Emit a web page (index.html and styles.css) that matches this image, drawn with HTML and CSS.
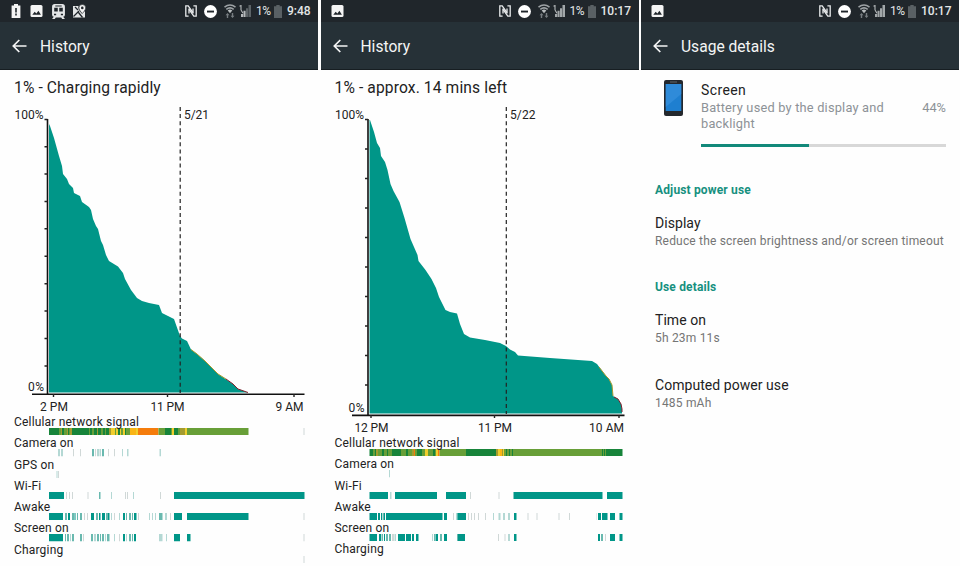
FILE: index.html
```html
<!DOCTYPE html>
<html lang="en">

<head>
    <meta charset="UTF-8" />
    <meta name="viewport" content="width=device-width, initial-scale=1.0" />
    <title>Battery History</title>
    <link rel="stylesheet" href="styles.css">
</head>

<body>
    <!-- shared icons -->
    <svg class="sprite">
        <symbol id="alert" viewBox="0 0 10 14">
            <path fill="#f4f4f4" fill-rule="evenodd" d="M3 0h4v1.6h2.4V14H.6V1.6H3zM4.2 4v4.4h1.6V4zM4.2 9.6v1.8h1.6V9.6z" />
        </symbol>
        <symbol id="image" viewBox="0 0 12 12">
            <rect width="12" height="12" rx="1.5" fill="#f4f4f4" />
            <path fill="#20262b" d="M1.8 9.7l2.4-3 1.7 1.8 2-2.7 2.5 3.9z" />
        </symbol>
        <symbol id="train" viewBox="0 0 12 14">
            <path fill="#e4e6e7" fill-rule="evenodd" d="M2.5 0h7A2.5 2.5 0 0 1 12 2.500V10a2 2 0 0 1-1.600 2L12 14H9.500l-1-1.500h-5L2.500 14H0l1.600-2A2 2 0 0 1 0 10V2.500A2.500 2.500 0 0 1 2.500 0zM2 3.500V7h3.300V3.500zM6.700 3.500V7H10V3.500zM3 1.300v1h6v-1zM1.800 9v1.600h2V9zM8.200 9v1.600h2V9z" />
        </symbol>
        <symbol id="map" viewBox="0 0 13 13">
            <path fill="#e4e6e7" d="M0 1.500h5.500C5 4 6 6 8.800 9L12 6.500V13H0z" />
            <path stroke="#20262b" stroke-width="1.300" fill="none" d="M.5 12L6 6.500M2 2.500l3 3M5.500 8l4 5" />
            <path fill="#f4f4f4" stroke="#20262b" stroke-width=".6" d="M9.300 0A3.400 3.400 0 0 1 12.700 3.400C12.700 5.500 9.300 9 9.300 9S5.900 5.500 5.900 3.400A3.400 3.400 0 0 1 9.300 0z" />
            <circle cx="9.300" cy="3.400" r="1.300" fill="#20262b" />
        </symbol>
        <symbol id="nfc" viewBox="0 0 12 12">
            <path fill="none" stroke="#e8eaeb" stroke-width="1.300" d="M3.600 11.200H.8V.8h2.400L8 7.600M8.400 .8h2.800v10.400H8.800L4 4.400" />
            <path fill="none" stroke="#e8eaeb" stroke-width="1.300" d="M4 3.400v5.200M8 3.400v5.200" />
        </symbol>
        <symbol id="dnd" viewBox="0 0 13 13">
            <circle cx="6.500" cy="6.500" r="6.400" fill="#fff" />
            <rect x="3" y="5.600" width="7" height="1.900" fill="#20262b" />
        </symbol>
        <symbol id="wifi" viewBox="0 0 12 14">
            <path fill="none" stroke="#9ea3a6" stroke-width="1.500" d="M.5 3.200Q6-1.300 11.500 3.200M2.300 5.400Q6 2.300 9.700 5.400" />
            <path fill="#b9bdbf" d="M3.700 6.500Q6 4.700 8.300 6.500L6 9.200z" />
            <path fill="#777d81" d="M3.500 9L5.500 11.200H4.200V14H2.800V11.200H1.500zM8.500 14l-2-2.200h1.300V9h1.400v2.800h1.300z" />
        </symbol>
        <symbol id="signal" viewBox="0 0 12 12">
            <path fill="#5c6367" d="M9.500 0H12v12H9.500zM7 3.200h2.100V12H7z" />
            <path fill="#b5b9bb" d="M4.500 5.800h2.100V12H4.500zM2 9h2.100v3H2z" />
            <path fill="none" stroke="#b5b9bb" stroke-width="1.100" d="M.5 1.300L2 .6V5M2 5l2 3.200" />
        </symbol>
        <symbol id="signal-full" viewBox="0 0 12 12">
            <path fill="#a2a7a9" d="M9.500 0H12v12H9.500zM7 3.200h2.100V12H7zM4.500 5.800h2.100V12H4.500zM2 9h2.100v3H2z" />
            <path fill="none" stroke="#b5b9bb" stroke-width="1.100" d="M.5 1.300L2 .6V5M2 5l2 3.200" />
        </symbol>
        <symbol id="battery" viewBox="0 0 8 13">
            <path fill="#596064" d="M2.300 0h3.400v1.300H8V13H0V1.300h2.300z" />
        </symbol>
        <symbol id="back" viewBox="0 0 15 14">
            <path fill="none" stroke="#f4f5f5" stroke-width="1.700" d="M14.500 7H1.500M7.300 1L1.300 7l6 6" />
        </symbol>
    </svg>

    <div class="screens">
        <!-- charging history -->
        <div class="phone">
            <div class="statusbar">
                <svg class="alert"><use href="#alert" /></svg>
                <svg class="image"><use href="#image" /></svg>
                <svg class="train"><use href="#train" /></svg>
                <svg class="map"><use href="#map" /></svg>
                <div class="status-right">
                    <svg class="nfc"><use href="#nfc" /></svg>
                    <svg class="dnd"><use href="#dnd" /></svg>
                    <svg class="wifi"><use href="#wifi" /></svg>
                    <svg class="signal"><use href="#signal" /></svg>
                    <span class="percent">1%</span>
                    <svg class="battery"><use href="#battery" /></svg>
                    <span class="time short">9:48</span>
                </div>
            </div>
            <div class="toolbar">
                <svg class="back"><use href="#back" /></svg>
                <h1>History</h1>
            </div>
            <h2>1% - Charging rapidly</h2>
            <svg class="chart chart-one" viewBox="0 101 318 313">
                <path class="area" d="M49 392.500V124L50 126L54 138L59 156L62 166L63 174L67 179L69 184L73 188L74 193L80 196L82 202L89 207L91 210L93 219L96 226L98 229L101 241L103 245L106 255L109 261L118 266.500L123 273L125 279L131 290L137 298L142 301L149 303L159 305L162 313L168 316L174 319L180 336L182 338.500L187 341L191 349.500L197 354L205 361L212 368L218 374L227 380L233 384L238 389L248 392.500z" />
                <path class="warn" d="M191 349.500L197 354L205 361L212 368L218 374L226 379" />
                <path class="critical" d="M226 379L233 384L238 389L248 392.500" />
                <path class="axis" d="M47.500 119V394M32 394.200H304.500" />
                <path class="tick" d="M44.500 119.500h3M44.500 146.700h3M44.500 174h3M44.500 201.500h3M44.500 228.800h3M44.500 256.300h3M44.500 283.700h3M44.500 311h3M44.500 338.500h3M44.500 366h3M53.500 394v3M167.500 394v3M294 394v3" />
                <path class="midnight" d="M180.200 107V393" />
                <text x="14.500" y="118.500" textLength="29">100%</text>
                <text x="28" y="391" textLength="16">0%</text>
                <text x="184" y="118.500" textLength="25">5/21</text>
                <text x="40" y="411" textLength="28">2 PM</text>
                <text x="150.500" y="411" textLength="34">11 PM</text>
                <text x="275.500" y="411" textLength="28">9 AM</text>
            </svg>
            <div class="usage" id="usage1"></div>
        </div>

        <!-- discharging history -->
        <div class="phone">
            <div class="statusbar">
                <svg class="image first"><use href="#image" /></svg>
                <div class="status-right">
                    <svg class="nfc"><use href="#nfc" /></svg>
                    <svg class="dnd"><use href="#dnd" /></svg>
                    <svg class="wifi"><use href="#wifi" /></svg>
                    <svg class="signal"><use href="#signal-full" /></svg>
                    <span class="percent">1%</span>
                    <svg class="battery"><use href="#battery" /></svg>
                    <span class="time">10:17</span>
                </div>
            </div>
            <div class="toolbar">
                <svg class="back"><use href="#back" /></svg>
                <h1>History</h1>
            </div>
            <h2>1% - approx. 14 mins left</h2>
            <svg class="chart chart-two" viewBox="1 101 318 334">
                <path class="area" d="M49.500 413.500V120H50L54 132L57 143L60 148L61 156L65 162L67.500 170L70.500 184L73.500 191L79.500 202L84.500 218L90.500 239L97.500 255L98.500 261L105.500 270L111.500 279L116 288L119 297L125.500 310L130 312L137 313.500L140 324L144 334L150 337.500L165 340L180 343L186 346L190 349.500L195 352L198 355.500L230 358L272 361L277 364L286 376L289 379L292 385L293 396L298 399L301 404L302 409V413.500z" />
                <path class="warn" d="M279 367L286 376L289 379L292 385L293 396" />
                <path class="critical" d="M294 397L298 399L301 404L302 409V412" />
                <path class="axis" d="M48 119V415M32 415.400H304.500" />
                <path class="tick" d="M45 119.500h3M45 149h3M45 178.500h3M45 208h3M45 237.500h3M45 267h3M45 296.500h3M45 326h3M45 355.500h3M45 385h3M51 415v3M174.500 415v3M299 415v3" />
                <path class="midnight" d="M186.300 107V414" />
                <text x="15" y="118.500" textLength="29">100%</text>
                <text x="28.500" y="412" textLength="16">0%</text>
                <text x="190" y="118.500" textLength="25.500">5/22</text>
                <text x="34.500" y="432" textLength="34">12 PM</text>
                <text x="158" y="432" textLength="34">11 PM</text>
                <text x="269" y="432" textLength="35">10 AM</text>
            </svg>
            <div class="usage" id="usage2"></div>
        </div>

        <!-- usage details -->
        <div class="phone">
            <div class="statusbar">
                <svg class="image first"><use href="#image" /></svg>
                <div class="status-right">
                    <svg class="nfc"><use href="#nfc" /></svg>
                    <svg class="dnd"><use href="#dnd" /></svg>
                    <svg class="wifi"><use href="#wifi" /></svg>
                    <svg class="signal"><use href="#signal-full" /></svg>
                    <span class="percent">1%</span>
                    <svg class="battery"><use href="#battery" /></svg>
                    <span class="time">10:17</span>
                </div>
            </div>
            <div class="toolbar">
                <svg class="back"><use href="#back" /></svg>
                <h1>Usage details</h1>
            </div>
            <div class="summary">
                <svg class="device" viewBox="0 0 19 36">
                    <rect width="19" height="36" rx="2" fill="#24282d" />
                    <rect x="1.700" y="4" width="15.600" height="27" fill="#1e7fd0" />
                    <path d="M17.300 4v10L1.700 27V4z" fill="#3b93e0" opacity=".6" />
                    <path d="M6 2h7" stroke="#62686d" />
                </svg>
                <div class="summary-text">
                    <h3>Screen</h3>
                    <div class="summary-row">
                        <p>Battery used by the display and backlight</p>
                        <span>44%</span>
                    </div>
                    <div class="progress">
                        <div class="progress-fill"></div>
                    </div>
                </div>
            </div>
            <div class="details">
                <h4>Adjust power use</h4>
                <div class="item">
                    <h3>Display</h3>
                    <p>Reduce the screen brightness and/or screen timeout</p>
                </div>
                <h4>Use details</h4>
                <div class="item">
                    <h3>Time on</h3>
                    <p>5h 23m 11s</p>
                </div>
                <div class="item">
                    <h3>Computed power use</h3>
                    <p>1485 mAh</p>
                </div>
            </div>
        </div>
    </div>

    <script src="script.js"></script>
</body>

</html>
```
FILE: styles.css
```css
* {
    box-sizing: border-box;
}

body {
    margin: 0;
    background: #fefefe;
    font-family: Roboto, "Liberation Sans", sans-serif;
    color: #222;
    overflow: hidden;
}

h1,
h2,
h3,
h4,
p {
    margin: 0;
    font-weight: 400;
}

svg {
    display: block;
    flex: none;
}

.sprite {
    display: none;
}

.screens {
    display: grid;
    grid-template-columns: 318px 318px 318px;
    column-gap: 2.5px;
    height: 566px;
}

.phone {
    overflow: hidden;
}

/* top bars */
.statusbar {
    display: flex;
    align-items: center;
    height: 22px;
    padding: 0 7px 0 11px;
    background: #20262b;
    color: #e4e6e7;
}

.alert {
    width: 10px;
    height: 14px;
}

.image {
    width: 13px;
    height: 12px;
    margin-left: 9px;
}

.image.first {
    margin-left: -1px;
}

.train {
    width: 13px;
    height: 15px;
    margin-left: 9px;
}

.map {
    width: 13px;
    height: 14px;
    margin-left: 8px;
}

.status-right {
    display: flex;
    align-items: center;
    margin-left: auto;
}

.nfc {
    width: 12px;
    height: 12px;
}

.dnd {
    width: 13px;
    height: 13px;
    margin-left: 7px;
}

.wifi {
    width: 12px;
    height: 14px;
    margin-left: 7px;
}

.signal {
    width: 12px;
    height: 12px;
    margin-left: 3px;
}

.percent {
    width: 15px;
    margin-left: 5px;
    font-size: 12px;
    letter-spacing: -0.6px;
}

.battery {
    width: 8px;
    height: 13px;
    margin-left: 3px;
}

.time {
    width: 31px;
    margin-left: 5px;
    font-size: 12px;
    font-weight: 500;
}

.time.short {
    width: 24px;
}

.toolbar {
    display: flex;
    align-items: center;
    height: 48px;
    padding: 1px 0 0 12px;
    background: #263137;
    border-bottom: 1px solid #171e22;
    color: #f4f5f5;
}

.back {
    width: 15px;
    height: 14px;
}

.toolbar h1 {
    margin-left: 13px;
    padding-top: 2px;
    font-size: 15.6px;
}

h2 {
    height: 31px;
    padding: 8px 0 0 14px;
    font-size: 15.6px;
    line-height: 21px;
    letter-spacing: 0.12px;
    white-space: nowrap;
}

/* battery chart */
.chart {
    width: 318px;
}

.chart-one {
    height: 313px;
}

.chart-two {
    height: 334px;
}

.chart text {
    font-size: 12px;
    fill: #222;
}

.area {
    fill: #009688;
}

.warn,
.critical,
.axis,
.tick,
.midnight {
    fill: none;
}

.warn {
    stroke: #a79b2d;
}

.critical {
    stroke: #82202c;
}

.axis {
    stroke: #111;
    stroke-width: 1.6;
}

.tick {
    stroke: #222;
    stroke-width: 1.4;
}

.midnight {
    stroke: #222;
    stroke-width: 1.2;
    stroke-dasharray: 4 3.07;
}

/* usage strips */
.usage-row {
    height: 21.25px;
}

.usage-row span {
    display: block;
    height: 14px;
    padding-left: 14px;
    font-size: 12px;
    line-height: 17px;
    letter-spacing: 0.18px;
    position: relative;
    z-index: 1;
}

.strip {
    width: 318px;
    height: 7.25px;
}

/* usage details */
.summary {
    display: flex;
    height: 107px;
    padding: 10px 13px 0 23px;
}

.device {
    width: 19px;
    height: 36px;
}

.summary-text {
    flex: 1;
    margin-left: 18px;
}

.summary h3 {
    font-size: 14px;
    line-height: 20px;
    letter-spacing: 0.4px;
}

.summary-row {
    display: flex;
    justify-content: space-between;
    color: #8d9297;
    font-size: 12.8px;
    line-height: 16px;
}

.summary-row p {
    width: 195px;
    letter-spacing: 0.2px;
}

.progress {
    height: 3px;
    margin-top: 12px;
    background: #d8d8d8;
}

.progress-fill {
    width: 44%;
    height: 3px;
    background: #12897a;
}

.details {
    padding-left: 14px;
}

.details h4 {
    height: 37px;
    padding-top: 5px;
    font-size: 12px;
    font-weight: 700;
    line-height: 16px;
    letter-spacing: 0.15px;
    color: #16907f;
}

.item {
    height: 60px;
}

.item + .item {
    padding-top: 5px;
}

.item h3 {
    font-size: 14px;
    line-height: 19px;
    letter-spacing: 0.05px;
}

.item p {
    font-size: 12px;
    line-height: 16px;
    letter-spacing: 0.19px;
    color: #757575;
    white-space: nowrap;
}
```
FILE: script.js
```js
const colors = {
    t: "#009688", // solid
    m: "#69b9af", // mostly on
    l: "#b4d8d4", // short bursts
    n: "#d0d8d7",
    d: "#17843a", // strong signal
    g: "#689f38",
    o: "#a49c2f",
    y: "#f0ce2d",
    a: "#f9b516",
    r: "#f57c0c"
};

// every entry is "color start end"
const usage1 = [
    ["Cellular network signal", "d 49 59,g 59 61,o 61 62,d 62 64,g 64 67,o 67 68,d 68 69,g 69 70,o 70 72,d 72 89,g 89 90,d 90 92,g 92 94,d 94 97,o 97 98,d 98 101,g 101 103,d 103 105,g 105 106,d 106 109,o 109 111,y 111 115,g 115 116,y 116 118,d 118 120,y 120 121,g 121 123,y 123 125,d 125 126,g 126 130,a 130 136,y 136 138,r 138 158.5,g 158.5 165,d 165 171,g 171 172,y 172 174,d 174 178,g 178 180,o 180 185,y 185 187,g 187 248.5,n 303.5 304.5"],
    ["Camera on", "l 58 60,l 61 63,n 73 74,n 80 81,m 92 94,n 95 96,l 97 99,l 99.5 101,m 102 104,n 108 109,n 114 115,l 122 123,l 127 128.5,l 159.5 161"],
    ["GPS on", "l 56.5 57.5,n 58 59"],
    ["Wi-Fi", "t 49 64,n 66 67,n 69 70,n 72 73,n 87.5 88.5,m 99 100.5,l 111 112,n 125 126,n 127 128,l 133 134,n 160 161,t 174 304.5"],
    ["Awake", "t 49 63,m 65 67,t 68 70,m 72 74,t 74.5 75.5,m 77 78,m 80 82,n 84 85,n 87 88,t 91 94,m 96 98,t 99 100.5,t 102 105,m 106 108,t 108 109.5,l 111 112,n 114 115,l 119 120,t 123 125,m 126 127,m 129 131,m 132 133,t 134 136.5,n 138 139,l 149 150,l 152 153,l 155 156,m 159 162.5,l 165 167,n 170 171,t 174 182,t 187 248.5,n 303.5 304.5"],
    ["Screen on", "t 49 63,m 65 66,m 67 69,l 70 71,m 72 74,m 80 82,n 83 84,m 91 93,l 94 96,m 97 99,m 100 101,m 102 104,l 105 106,m 107 109.5,l 114 115,n 119 120,t 123 125,l 126 127,m 129 131,m 132 133,t 134 136,l 159 162.5,l 166 167,t 174 180,t 187 190.5,n 303.5 304.5"],
    ["Charging", "n 303.5 304.5"]
];

const usage2 = [
    ["Cellular network signal", "d 49.5 53,g 53 55,d 55 56,o 56 58,g 58 62,d 62 64,g 64 67,d 67 68,g 68 72,d 72 81,g 81 86,d 86 88,g 88 92,o 92 94,r 94 95,g 95 97,d 97 102,g 102 105,y 105 108,g 108 113,d 113 115,g 115 116,y 116 118,r 118 119.5,g 119.5 146,d 146 176,o 176 178,y 178 180,a 180 182,o 182 183,y 183 184,g 184 186,d 186 187,g 187 189,d 189 190,g 190 192,d 192 193,g 193 282,d 282 283,g 283 284,d 284 285,g 285 286,d 286 302.5"],
    ["Camera on", "l 69 70"],
    ["Wi-Fi", "t 49.5 68,l 70 71.5,t 75 117,t 126 146,n 150 151,n 178.5 179.5,t 193.5 282.5,t 287 302.5"],
    ["Awake", "t 49.5 57,t 58 60,t 61 62,m 62.5 64,t 64 65,t 66 122.5,t 124 127,n 133 134,m 136.5 137.5,t 137.5 146,n 148 149,n 151 152,n 154 155,n 158 159,n 165 166,l 173 174,l 178.5 180.5,l 183 185,l 188 190,t 194 196.5,n 207.5 208.5,n 216.5 217.5,n 238.5 239.5,n 249 250,n 276 276.5,t 278 281,t 282 287.5,t 290 295,t 299.5 302.5"],
    ["Screen on", "t 49.5 57,t 59 61,m 61.5 63,t 64 65,m 66 68,m 69 71,n 72 74,l 74.5 76,t 78 85,t 86 91,t 92 94,t 96 98.5,l 112 113,m 114 115,t 115.5 118,m 120 122,t 124 127,m 137 138,t 138 145,n 178 179,n 184.5 185.5,l 188 190,t 194 196.5,t 278 280,m 281 283,n 285 286,t 290 295,t 299.5 302.5"],
    ["Charging", ""]
];

function drawUsage(id, rows, offset) {
    document.getElementById(id).innerHTML = rows.map(([label, parts]) => {
        const rects = parts.split(",").filter(Boolean).map(part => {
            const [color, start, end] = part.split(" ");
            return `<rect x="${start - offset}" width="${end - start}" height="7.25" fill="${colors[color]}" />`;
        }).join("");
        return `<div class="usage-row"><span>${label}</span><svg class="strip">${rects}</svg></div>`;
    }).join("");
}

drawUsage("usage1", usage1, 0);
drawUsage("usage2", usage2, 1);
```
